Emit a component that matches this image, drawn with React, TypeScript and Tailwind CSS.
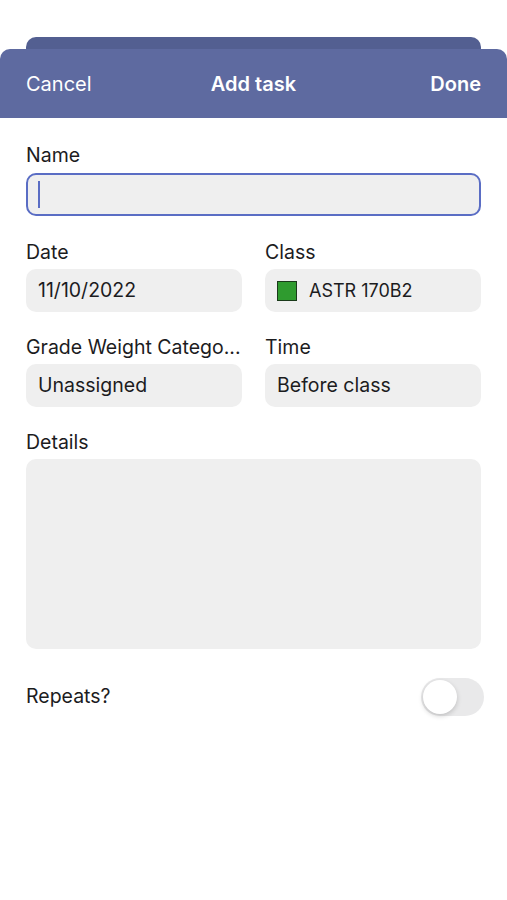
import React from "react";

function Field({ children }: { children: React.ReactNode }) {
  return (
    <div className="h-[43px] rounded-[10px] bg-[#efefef] flex items-center px-3 text-[19.5px] text-[#1c1c1e]">
      {children}
    </div>
  );
}

export default function App() {
  return (
    <div className="w-[507px] h-[900px] bg-white font-['Inter',sans-serif] text-[#1c1c1e] overflow-hidden">
      <div className="h-[37px]" />
      <div className="mx-[26px] h-[12px] rounded-t-[10px] bg-[#535f91]" />
      <div className="h-[69px] rounded-t-[10px] bg-[#5e6aa0] flex items-center justify-between px-[26px] text-white text-[20px]">
        <span className="w-[90px]">Cancel</span>
        <span className="font-semibold">Add task</span>
        <span className="w-[90px] text-right font-semibold">Done</span>
      </div>
      <div className="px-[26px] pt-[25px]">
        <div className="text-[19.5px] leading-[24px] mb-[6px]">Name</div>
        <div className="h-[43px] rounded-[10px] bg-[#efefef] border-2 border-[#5a6dc4] flex items-center px-[10px]">
          <div className="w-[2px] h-[27px] bg-[#5a6dc4]" />
        </div>
        <div className="grid grid-cols-2 gap-x-[23px] mt-[24px]">
          <div>
            <div className="text-[19.5px] leading-[24px] mb-[5px]">Date</div>
            <Field>11/10/2022</Field>
          </div>
          <div>
            <div className="text-[19.5px] leading-[24px] mb-[5px]">Class</div>
            <Field>
              <div className="w-[20px] h-[20px] bg-[#2f9b2f] border border-[#1a3a1a] mr-3" />
              <span className="text-[18px]">ASTR 170B2</span>
            </Field>
          </div>
          <div className="mt-[23px] min-w-0">
            <div className="text-[19.5px] leading-[24px] mb-[5px] whitespace-nowrap overflow-hidden">Grade Weight Catego...</div>
            <Field>Unassigned</Field>
          </div>
          <div className="mt-[23px]">
            <div className="text-[19.5px] leading-[24px] mb-[5px]">Time</div>
            <Field>Before class</Field>
          </div>
        </div>
        <div className="text-[19.5px] leading-[24px] mt-[23px] mb-[5px]">Details</div>
        <div className="h-[190px] rounded-[10px] bg-[#efefef]" />
        <div className="flex items-center justify-between mt-[29px]">
          <span className="text-[19.5px]">Repeats?</span>
          <div className="w-[63px] h-[38px] rounded-full bg-[#e9e9ea] p-[2px] mr-[-3px]">
            <div className="w-[34px] h-[34px] rounded-full bg-white shadow-[0_2px_5px_rgba(0,0,0,0.18)]" />
          </div>
        </div>
      </div>
    </div>
  );
}
